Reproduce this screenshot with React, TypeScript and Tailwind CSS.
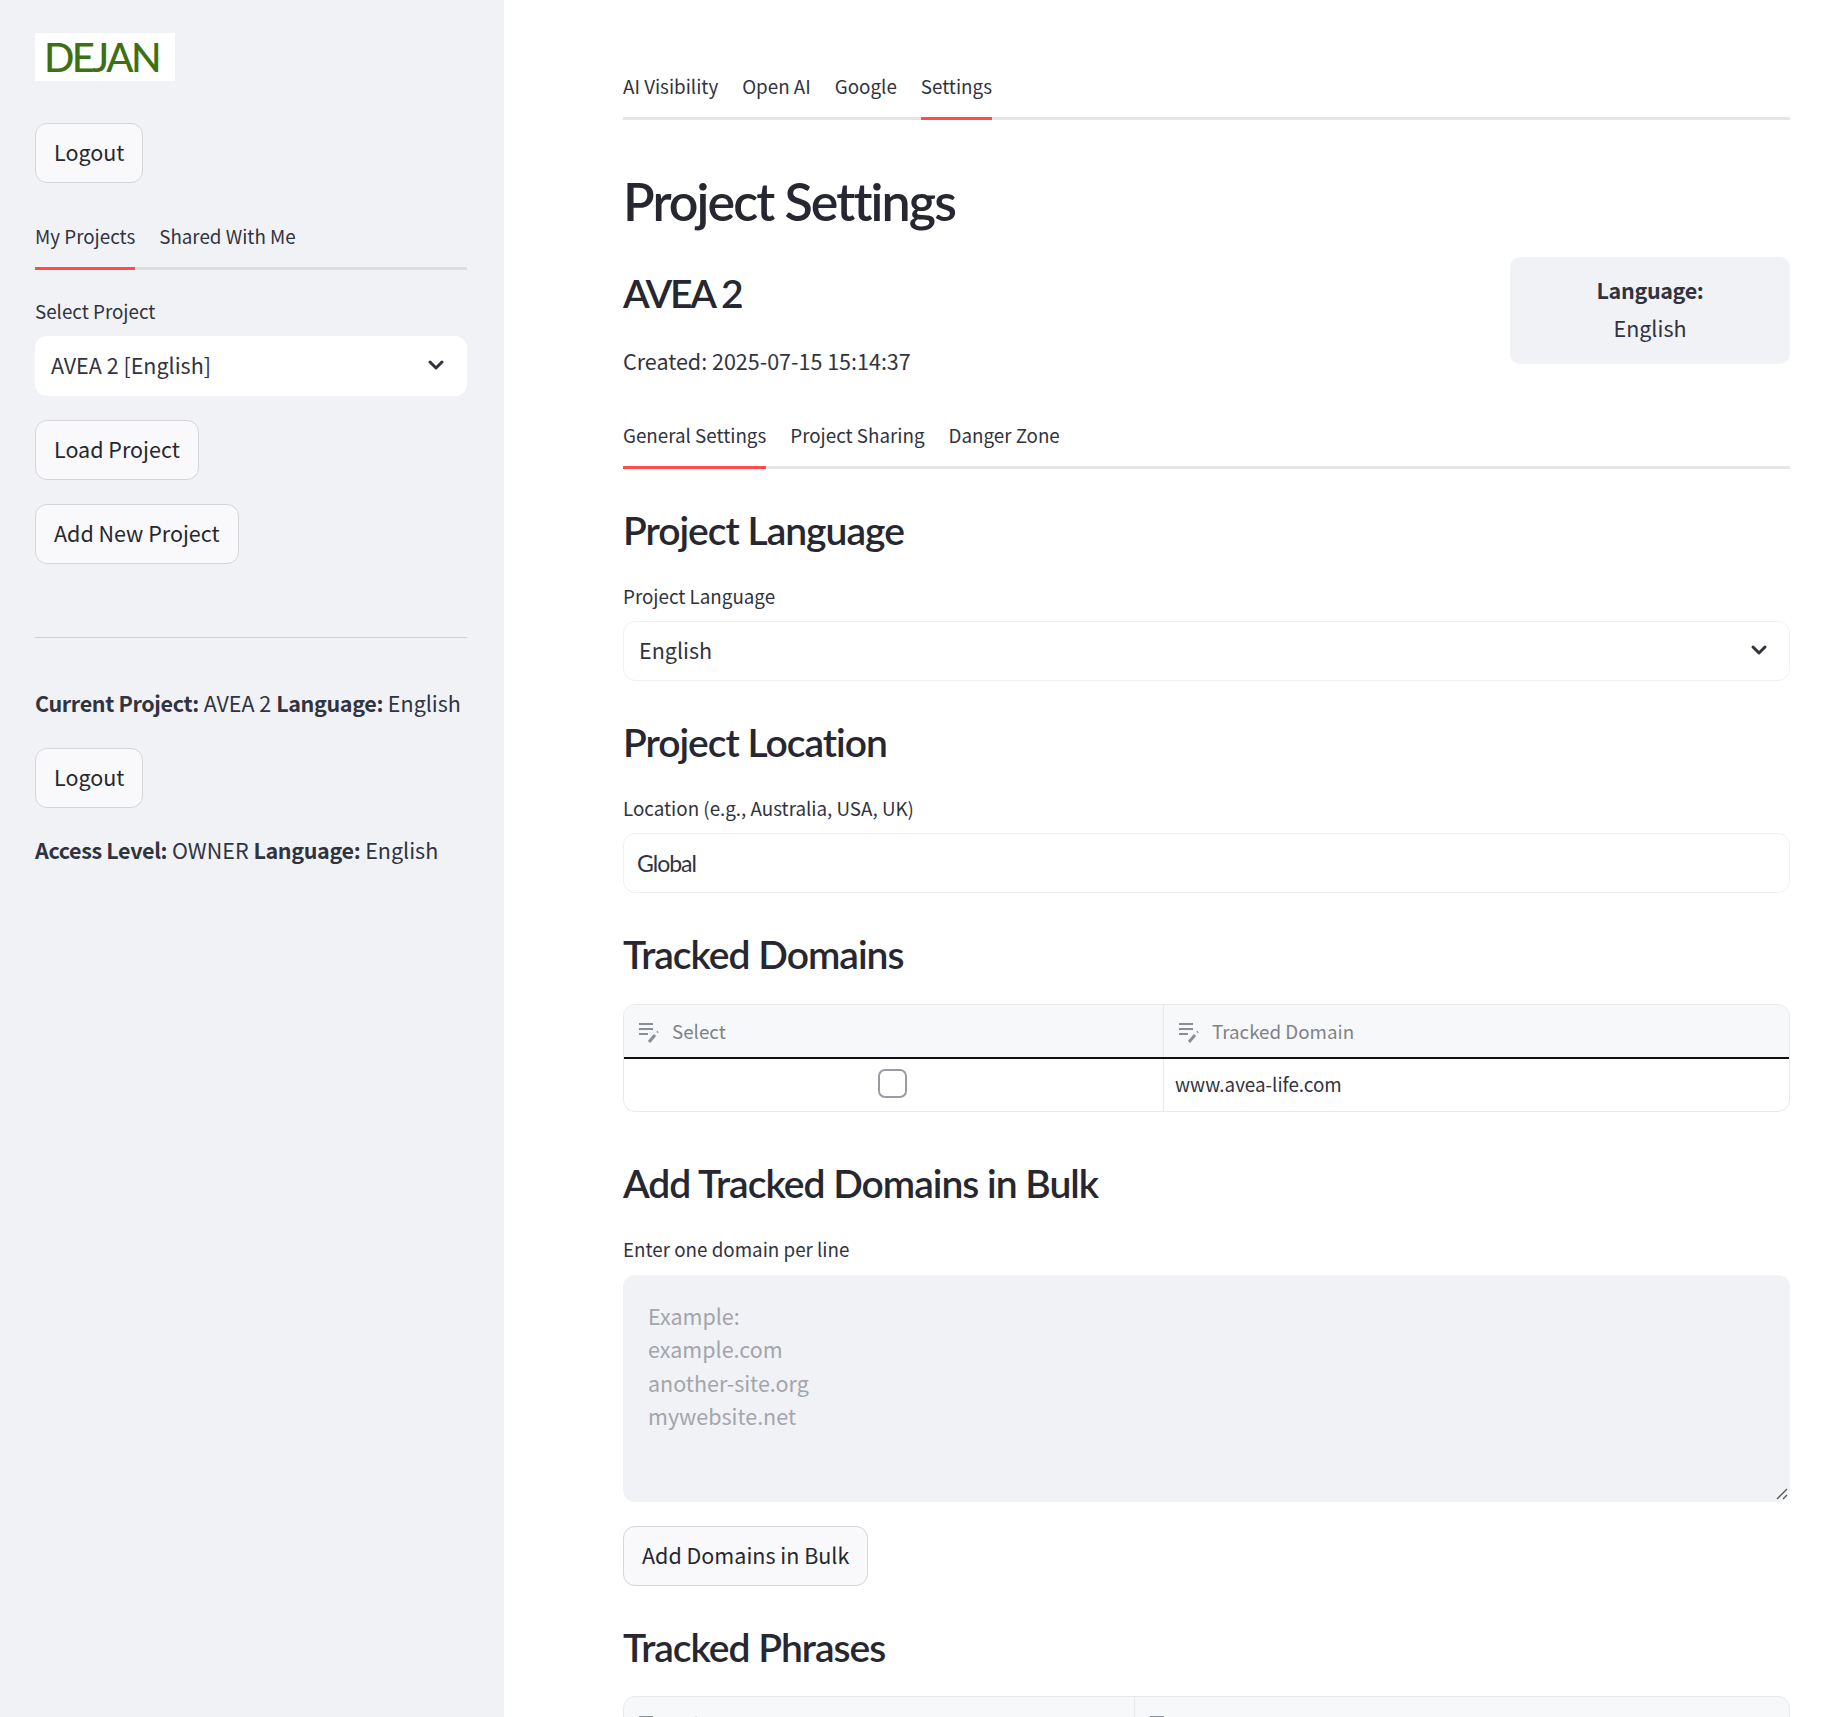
import { ChevronDown } from "lucide-react";

const body = "font-['Noto_Sans_CJK_SC','Source_Sans_3',sans-serif]";
const heading = "font-['Lato',sans-serif]";

function Btn({ label, className = "" }: { label: string; className?: string }) {
  return (
    <button className={`h-[60px] px-[18px] pb-[2px] rounded-[12px] border border-[#d5d6da] bg-[#f9f9fb] text-[21.5px] text-[#262730] ${className}`}>
      {label}
    </button>
  );
}

function Tabs({ items, active, line = "border-[#e6e6e8]" }: { items: string[]; active: string; line?: string }) {
  return (
    <div className={`flex gap-[24px] border-b-[3px] h-[48px] ${line}`}>
      {items.map((t) => (
        <div
          key={t}
          className={`h-[48px] text-[18.8px] leading-[28px] text-[#31333f] ${t === active ? "border-b-[3px] border-[#ff4b4b]" : ""}`}
        >
          {t}
        </div>
      ))}
    </div>
  );
}

function EditIcon() {
  return (
    <svg width="22" height="22" viewBox="0 0 22 22" fill="none" stroke="#8b8d96" className="mt-[3px] shrink-0">
      <path d="M1 2h14M1 7h14M1 12h9" strokeWidth="2" />
      <path d="M11 20l6-7" strokeWidth="3" />
      <path d="M19 10.5l1-1" strokeWidth="2" />
    </svg>
  );
}

function Th({ label, className = "" }: { label: string; className?: string }) {
  return (
    <div className={`flex items-center gap-[12px] pl-[14px] text-[18.75px] text-[#7f8189] ${className}`}>
      <EditIcon />
      {label}
    </div>
  );
}

function H2({ children, className = "" }: { children: string; className?: string }) {
  return <h2 className={`${heading} text-[39px] leading-[52px] font-semibold tracking-[-1px] text-[#262730] ${className}`}>{children}</h2>;
}

function Strong({ children }: { children: string }) {
  return <b className="font-semibold tracking-[-0.35px]">{children}</b>;
}

export default function App() {
  return (
    <div className={`${body} flex h-[1717px] w-[1840px] overflow-hidden bg-white text-[#31333f]`}>
      {/* sidebar */}
      <aside className="w-[504px] shrink-0 bg-[#f0f2f6] pl-[35px] pr-[37px] pt-[33px]">
        <div className={`${heading} flex h-[48px] w-[140px] items-center bg-white pl-[9px] text-[40px] font-medium tracking-[-2.6px] text-[#3d7012]`}>
          DEJAN
        </div>
        <Btn label="Logout" className="mt-[42px] block" />
        <div className="mt-[39px]">
          <Tabs items={["My Projects", "Shared With Me"]} active="My Projects" line="border-[#dcdde2]" />
        </div>
        <label className="mt-[23px] block text-[18.8px] leading-[36px]">Select Project</label>
        <div className="mt-[7px] flex h-[60px] items-center justify-between rounded-[12px] bg-white pb-[2px] pl-[16px] pr-[19px] text-[21.5px]">
          AVEA 2 [English]
          <ChevronDown size={24} strokeWidth={3} />
        </div>
        <Btn label="Load Project" className="mt-[24px] block" />
        <Btn label="Add New Project" className="mt-[24px] block" />
        <hr className="mt-[73px] border-[#d0d1d5]" />
        <p className="mt-[47px] text-[21.5px] leading-[36px] whitespace-nowrap">
          <Strong>Current Project:</Strong> AVEA 2 <Strong>Language:</Strong> English
        </p>
        <Btn label="Logout" className="mt-[27px] block" />
        <p className="mt-[24px] text-[21.5px] leading-[36px] whitespace-nowrap">
          <Strong>Access Level:</Strong> OWNER <Strong>Language:</Strong> English
        </p>
      </aside>

      {/* main */}
      <main className="w-[1167px] ml-[119px] pt-[72px] shrink-0">
        <Tabs items={["AI Visibility", "Open AI", "Google", "Settings"]} active="Settings" />
        <h1 className={`${heading} mt-[49px] text-[52px] leading-[64px] font-semibold tracking-[-1.9px] text-[#262730]`}>Project Settings</h1>

        <div className="mt-[24px] flex justify-between">
          <div>
            <h2 className={`${heading} mt-[11px] text-[39px] leading-[50px] font-semibold tracking-[-2.2px] text-[#262730]`}>AVEA 2</h2>
            <p className="mt-[25px] text-[21.5px] leading-[36px]">Created: 2025-07-15 15:14:37</p>
          </div>
          <div className="flex h-[107px] w-[280px] flex-col items-center justify-center rounded-[10px] bg-[#f0f2f6] pb-[4px] text-[21.5px] leading-[38px]">
            <Strong>Language:</Strong>
            <span>English</span>
          </div>
        </div>

        <div className="mt-[42px]">
          <Tabs items={["General Settings", "Project Sharing", "Danger Zone"]} active="General Settings" />
        </div>

        <H2 className="mt-[35px]">Project Language</H2>
        <label className="mt-[22px] block text-[18.8px] leading-[36px]">Project Language</label>
        <div className="mt-[7px] flex h-[60px] items-center justify-between rounded-[12px] border border-[#eef0f3] pb-[2px] pl-[15px] pr-[18px] text-[21.5px]">
          English
          <ChevronDown size={24} strokeWidth={3} />
        </div>

        <H2 className="mt-[35px]">Project Location</H2>
        <label className="mt-[22px] block text-[18.8px] leading-[36px]">Location (e.g., Australia, USA, UK)</label>
        <div className={`${heading} mt-[7px] flex h-[60px] items-center rounded-[12px] border border-[#eef0f3] pl-[13px] text-[23px] tracking-[-1px]`}>Global</div>

        <H2 className="mt-[35px]">Tracked Domains</H2>
        <div className="mt-[24px] h-[108px] overflow-hidden rounded-[12px] border border-[#e8e9ec]">
          <div className="flex h-[54px] border-b-2 border-[#111] bg-[#f7f8fa]">
            <Th label="Select" className="w-[540px] border-r border-[#e8e9ec]" />
            <Th label="Tracked Domain" className="pl-[12px]" />
          </div>
          <div className="flex h-[52px]">
            <div className="flex w-[540px] items-center justify-center border-r border-[#e8e9ec]">
              <div className="mr-[2px] mb-[4px] h-[29px] w-[29px] rounded-[7px] border-2 border-[#9a9ba3]" />
            </div>
            <div className="flex items-center pb-[2px] pl-[11px] text-[18.8px]">www.avea-life.com</div>
          </div>
        </div>

        <H2 className="mt-[45px]">Add Tracked Domains in Bulk</H2>
        <label className="mt-[22px] block text-[18.8px] leading-[36px]">Enter one domain per line</label>
        <div className="relative mt-[8px] h-[227px] rounded-[12px] bg-[#f0f2f6] px-[25px] pt-[24px] text-[21.5px] leading-[33.4px] text-[#a3a5ab]">
          <div>Example:</div>
          <div>example.com</div>
          <div>another-site.org</div>
          <div>mywebsite.net</div>
          <svg width="12" height="12" viewBox="0 0 12 12" fill="none" stroke="#555" strokeWidth="1.3" className="absolute bottom-[2px] right-[2px]">
            <path d="M1 11L11 1M7 11l4-4" />
          </svg>
        </div>
        <Btn label="Add Domains in Bulk" className="mt-[24px] block" />

        <H2 className="mt-[35px]">Tracked Phrases</H2>
        <div className="mt-[23px] h-[60px] rounded-[12px] border border-[#e8e9ec] bg-[#f7f8fa]">
          <div className="flex h-[54px]">
            <Th label="Select" className="w-[511px] border-r border-[#e8e9ec]" />
            <Th label="Tracked Phrase" />
          </div>
        </div>
      </main>
    </div>
  );
}
